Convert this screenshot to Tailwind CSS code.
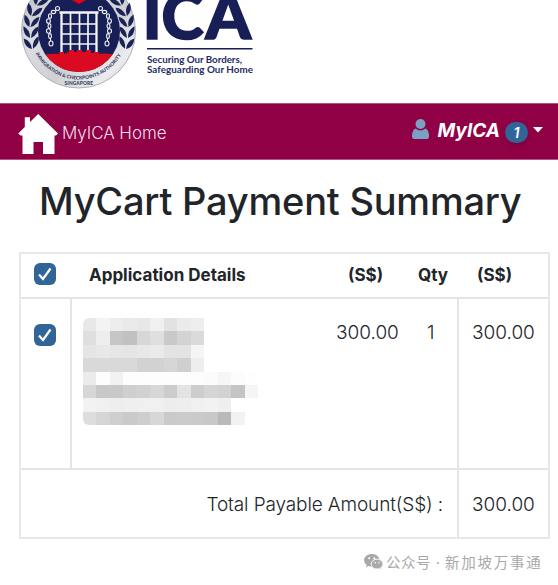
<!DOCTYPE html>
<html lang="en">
<head>
  <meta charset="UTF-8">
  <meta name="viewport" content="width=device-width, initial-scale=1.0">
  <title>MyCart Payment Summary</title>
  <!-- Tailwind CSS -->
  <script src="https://cdn.jsdelivr.net/npm/@tailwindcss/browser@4"></script>
</head>
<body class="h-[585px] overflow-hidden bg-white font-['Inter',sans-serif] text-[#212529]">

  <!-- Logo -->
  <header class="h-[103px] overflow-hidden">
    <svg class="block" width="280" height="100" viewBox="0 0 280 100">
      <defs>
        <linearGradient id="silver" x1="0" y1="0" x2="1" y2="1">
          <stop offset="0" stop-color="#b5b7bb" />
          <stop offset="0.35" stop-color="#dcdde0" />
          <stop offset="0.6" stop-color="#cfd0d3" />
          <stop offset="0.82" stop-color="#ececee" />
          <stop offset="1" stop-color="#b0b2b6" />
        </linearGradient>
        <clipPath id="disc"><circle cx="79" cy="31" r="41" /></clipPath>
        <path id="leaf" d="M0 0 Q-7 -3 -6 -12 Q1 -8 0 0Z M1 0 Q2 -9 9 -11 Q9 -3 1 0Z" />
        <path id="arc" d="M35.500 53.500 A49 49 0 0 0 122 53.500" />
        <g id="chain" fill="none" stroke="#eef0f6" stroke-width="1.1">
          <circle cx="57.5" cy="8.5" r="2" />
          <ellipse cx="53.5" cy="12" rx="2.2" ry="1.6" />
          <ellipse cx="50" cy="16" rx="1.5" ry="2.3" />
          <ellipse cx="48.5" cy="21" rx="1.9" ry="2.3" />
          <ellipse cx="49.5" cy="26" rx="1.4" ry="2.3" />
          <ellipse cx="48.5" cy="31" rx="2" ry="2.2" />
          <ellipse cx="50" cy="36" rx="1.4" ry="2.4" />
          <ellipse cx="51" cy="43.5" rx="2" ry="2.5" />
          <path d="M50.5 38v3" />
        </g>
      </defs>
      <circle cx="78.5" cy="31" r="57" fill="url(#silver)" stroke="#aeb0b4" />
      <!-- Laurel leaves -->
      <g fill="#1a2358">
        <use href="#leaf" transform="translate(32 49) rotate(-12)" />
        <use href="#leaf" transform="translate(30 38) rotate(-3)" />
        <use href="#leaf" transform="translate(29.500 27) rotate(5)" />
        <use href="#leaf" transform="translate(31 16) rotate(15)" />
        <use href="#leaf" transform="translate(36 5) rotate(25)" />
        <use href="#leaf" transform="translate(126 49) scale(-1 1) rotate(-12)" />
        <use href="#leaf" transform="translate(128 38) scale(-1 1) rotate(-3)" />
        <use href="#leaf" transform="translate(128.500 27) scale(-1 1) rotate(5)" />
        <use href="#leaf" transform="translate(127 16) scale(-1 1) rotate(15)" />
        <use href="#leaf" transform="translate(122 5) scale(-1 1) rotate(25)" />
      </g>
      <circle cx="79" cy="31" r="41" fill="#171f56" />
      <path d="M72 0h14l-7 4z" fill="#e3001b" />
      <!-- Portcullis -->
      <g fill="none" stroke="#f3f4f8">
        <path d="M59.500 12.500H98.500" stroke-width="2.500" />
        <path d="M61.500 12V54M96.500 12V54" stroke-width="2.300" />
        <path d="M70.500 13V54M79.500 13V54M88 13V54" stroke-width="1.700" />
        <path d="M61 24H97M61 34H97M61 44H97" stroke-width="1.600" />
      </g>
      <use href="#chain" />
      <use href="#chain" transform="translate(158 0) scale(-1 1)" />
      <path clip-path="url(#disc)" d="M38 74V56Q48 53 59 54V52H64V54L69 52V50H74V52H77V50H82V52H86V50H91V53H94V52H99V54Q110 52 121 57V74Z" fill="#dc0a20" />
      <text class="font-['Lato',sans-serif]" font-size="4.800" font-weight="900" fill="#343a65"><textPath href="#arc" textLength="104" lengthAdjust="spacingAndGlyphs">IMMIGRATION &amp; CHECKPOINTS AUTHORITY</textPath></text>
      <text class="font-['Lato',sans-serif]" x="64.500" y="84.500" font-size="4.800" font-weight="900" fill="#343a65" textLength="28.500">SINGAPORE</text>

      <!-- Wordmark -->
      <g class="font-['Lato',sans-serif]" fill="#171f56" stroke="#171f56" stroke-width="1.600" font-weight="900">
        <text x="142.700" y="38.700" font-size="62">I</text>
        <text x="161.500" y="38.700" font-size="62" textLength="42" lengthAdjust="spacingAndGlyphs">C</text>
        <text x="205.500" y="38.700" font-size="62" textLength="45.500" lengthAdjust="spacingAndGlyphs">A</text>
      </g>
      <path d="M147 48.700H252.500" stroke="#171f56" stroke-width="1.400" />
      <g class="font-['Lato',sans-serif]" fill="#252c5f" font-size="9.800" font-weight="700">
        <text x="147" y="63" textLength="95">Securing Our Borders,</text>
        <text x="147" y="73.300" textLength="106">Safeguarding Our Home</text>
      </g>
    </svg>
  </header>

  <!-- Navbar -->
  <nav class="flex h-[57px] items-center justify-between border-y border-[#b0537f] bg-[#8f0045] pl-[18px] pr-[15px]">
    <a href="#" class="flex items-center">
      <svg class="mt-1" width="40" height="42" viewBox="0 0 40 42" fill="#fff">
        <path d="M20.200 1 40 20.500 38 22.500H36.500V41H25V29H15.500V41H4.500V22.500H2.500L.3 20.500 6.800 14V4.300H12V9Z" />
      </svg>
      <span class="mt-0.5 ml-1 text-[17px] leading-6 font-light tracking-[-0.050px] text-[#f3dfe9]">MyICA Home</span>
    </a>
    <div class="flex items-center pb-0.5">
      <svg class="mb-1" width="17" height="20" viewBox="0 0 17 20" fill="#7ba0c4">
        <circle cx="8.500" cy="5" r="5" />
        <path d="M3.500 9.500Q8.500 13.500 13.500 9.500Q17 11 17 17.500Q17 20 14.500 20H2.500Q0 20 0 17.500Q0 11 3.500 9.500Z" />
      </svg>
      <span class="ml-[9px] text-[19px] leading-6 font-bold text-white italic">MyICA</span>
      <span class="mt-1 ml-[5px] flex h-[21px] w-[23px] items-center justify-center rounded-full bg-[#316598] text-[14px] font-semibold text-white italic shadow-md">1</span>
      <svg class="mb-0.5 ml-[5px]" width="10" height="6" viewBox="0 0 10 6" fill="#fff"><path d="M0 0H10L5 5.500Z" /></svg>
    </div>
  </nav>

  <!-- Main Content -->
  <main class="pl-[19px] pr-2">
    <h1 class="flex h-[92px] items-center pb-2.5 pl-5 text-[38px] font-medium tracking-[-0.220px] whitespace-nowrap">MyCart Payment Summary</h1>

    <div class="border-2 border-[#e8e8e8]">
      <!-- Table header -->
      <div class="grid h-[45px] grid-cols-[68px_1fr_70px_59px_71px] items-center border-b-2 border-[#e5e5e5] text-[17px] font-bold">
        <span class="mb-1 ml-[13px] flex size-[22px] items-center justify-center rounded-md bg-[#316598]">
          <svg width="16" height="16" viewBox="0 0 16 16" fill="none" stroke="#fff" stroke-width="2.200"><path d="M2 8.500 6 13 13.500 2.500" /></svg>
        </span>
        <span>Application Details</span>
        <span>(S$)</span>
        <span>Qty</span>
        <span>(S$)</span>
      </div>

      <!-- Item -->
      <div class="grid h-[171px] grid-cols-[51px_1fr_91px] border-b-2 border-[#e5e5e5]">
        <div class="border-r-2 border-[#e5e5e5] pt-[25px] pl-[13px]">
          <span class="flex size-[22px] items-center justify-center rounded-md bg-[#316598]">
            <svg width="16" height="16" viewBox="0 0 16 16" fill="none" stroke="#fff" stroke-width="2.200"><path d="M2 8.500 6 13 13.500 2.500" /></svg>
          </span>
        </div>
        <div class="flex pl-[11px]">
          <div id="redacted" class="mt-[19px] grid h-[107px] w-[175px] grid-cols-13 grid-rows-8 overflow-hidden rounded-l-md"></div>
          <span class="mt-5 ml-[78px] w-[91px] text-[19px] leading-7 font-light">300.00</span>
          <span class="mt-5 text-[19px] leading-7 font-light">1</span>
        </div>
        <div class="border-l-2 border-[#e5e5e5] pt-5 pl-[13px] text-[19px] leading-7 font-light">300.00</div>
      </div>

      <!-- Total -->
      <div class="grid h-[67px] grid-cols-[1fr_91px] text-[19px] font-light">
        <div class="flex items-center justify-end pt-[3px] pr-[14px] tracking-[-0.120px]">Total Payable Amount(S$) :</div>
        <div class="flex items-center border-l-2 border-[#e5e5e5] pt-[3px] pl-[13px]">300.00</div>
      </div>
    </div>
  </main>

  <!-- Account credit -->
  <footer class="flex items-center justify-end pt-3 pr-[17px] text-[#a9a9a9]">
    <svg width="19" height="16" viewBox="0 0 19 16">
      <path d="M8 0C3.500 0 0 2.700 0 6.200Q0 9 2.700 11L2 13.500 4.800 12Q6 12.500 8 12.500C12 12.500 15.500 9.700 15.500 6.200S12 0 8 0Z" fill="#a9a9a9" />
      <path d="M13 5.200C9.700 5.200 7.200 7.400 7.200 10.200S9.700 15 13 15Q14.300 15 15.300 14.500L17.400 15.700 16.900 13.700Q19 12.200 19 10.200C19 7.400 16.300 5.200 13 5.200Z" fill="#a9a9a9" stroke="#fff" stroke-width="0.900" />
      <g fill="#fff"><circle cx="5.200" cy="4.200" r="1" /><circle cx="10.300" cy="4.200" r="1" /><circle cx="11.200" cy="8.800" r="0.800" /><circle cx="15" cy="8.800" r="0.800" /></g>
    </svg>
    <div class="ml-[3px] flex font-['Noto_Sans_CJK_SC',sans-serif] text-[14.500px] leading-[22px]">
      <span class="tracking-[0.500px]">公众号</span>
      <span class="w-[14px] text-center font-['Noto_Sans',sans-serif]">·</span>
      <span class="-mr-[1.500px] tracking-[1.750px]">新加坡万事通</span>
    </div>
  </footer>

  <script>
    // Masked applicant details, one shade per block
    const shades = [
      'e8e8e8 f3f3f3 ededed e9ebea e7e7e7 f0f0f0 e2e2e2 ebebeb eeeeee ffffff ffffff ffffff ffffff',
      'dfdfdf eeeeee c5c7c6 c1c1c1 d7d7d7 dfdfdf c9c9c9 d3d3d3 dadada ffffff ffffff ffffff ffffff',
      'e5e5e5 e8e8e8 e6e6e6 e5e5e5 e8e8e8 eaeaea e3e3e3 e3e3e3 f5f5f5 ffffff ffffff ffffff ffffff',
      'd9d9d9 d9d9d9 d9d9d9 d9d9d9 d2d2d2 d2d2d2 d6d6d6 cfcfcf eeeeee ffffff ffffff ffffff ffffff',
      'ebebeb fdfdfd f2f2f2 fdfdfd fdfdfd fdfdfd fdfdfd fdfdfd fdfdfd fbfbfb f6f6f6 fcfcfc fefefe',
      'd7d7d7 c8c8c8 c9c9c9 cfcfcf cfd2d1 d7d7d7 cccccc e3e3e3 cdcdcd d5d5d5 d2d2d2 c4c4c4 f5f5f5',
      'f2f2f2 f0f0f0 eeeeee efefef f0f0f0 f0f0f0 ededed eeeeee f0f0f0 f2f2f2 efefef ffffff ffffff',
      'dddddd d5d5d5 cfcfcf cacaca cecece d7d7d7 cacaca cbcbcb cacaca c8c8c8 b9b9b9 f2f2f2 ffffff'
    ];
    const redacted = document.getElementById('redacted');
    shades.join(' ').split(' ').forEach(shade => {
      redacted.insertAdjacentHTML('beforeend', `<span style="background:#${shade}"></span>`);
    });
  </script>
</body>
</html>
